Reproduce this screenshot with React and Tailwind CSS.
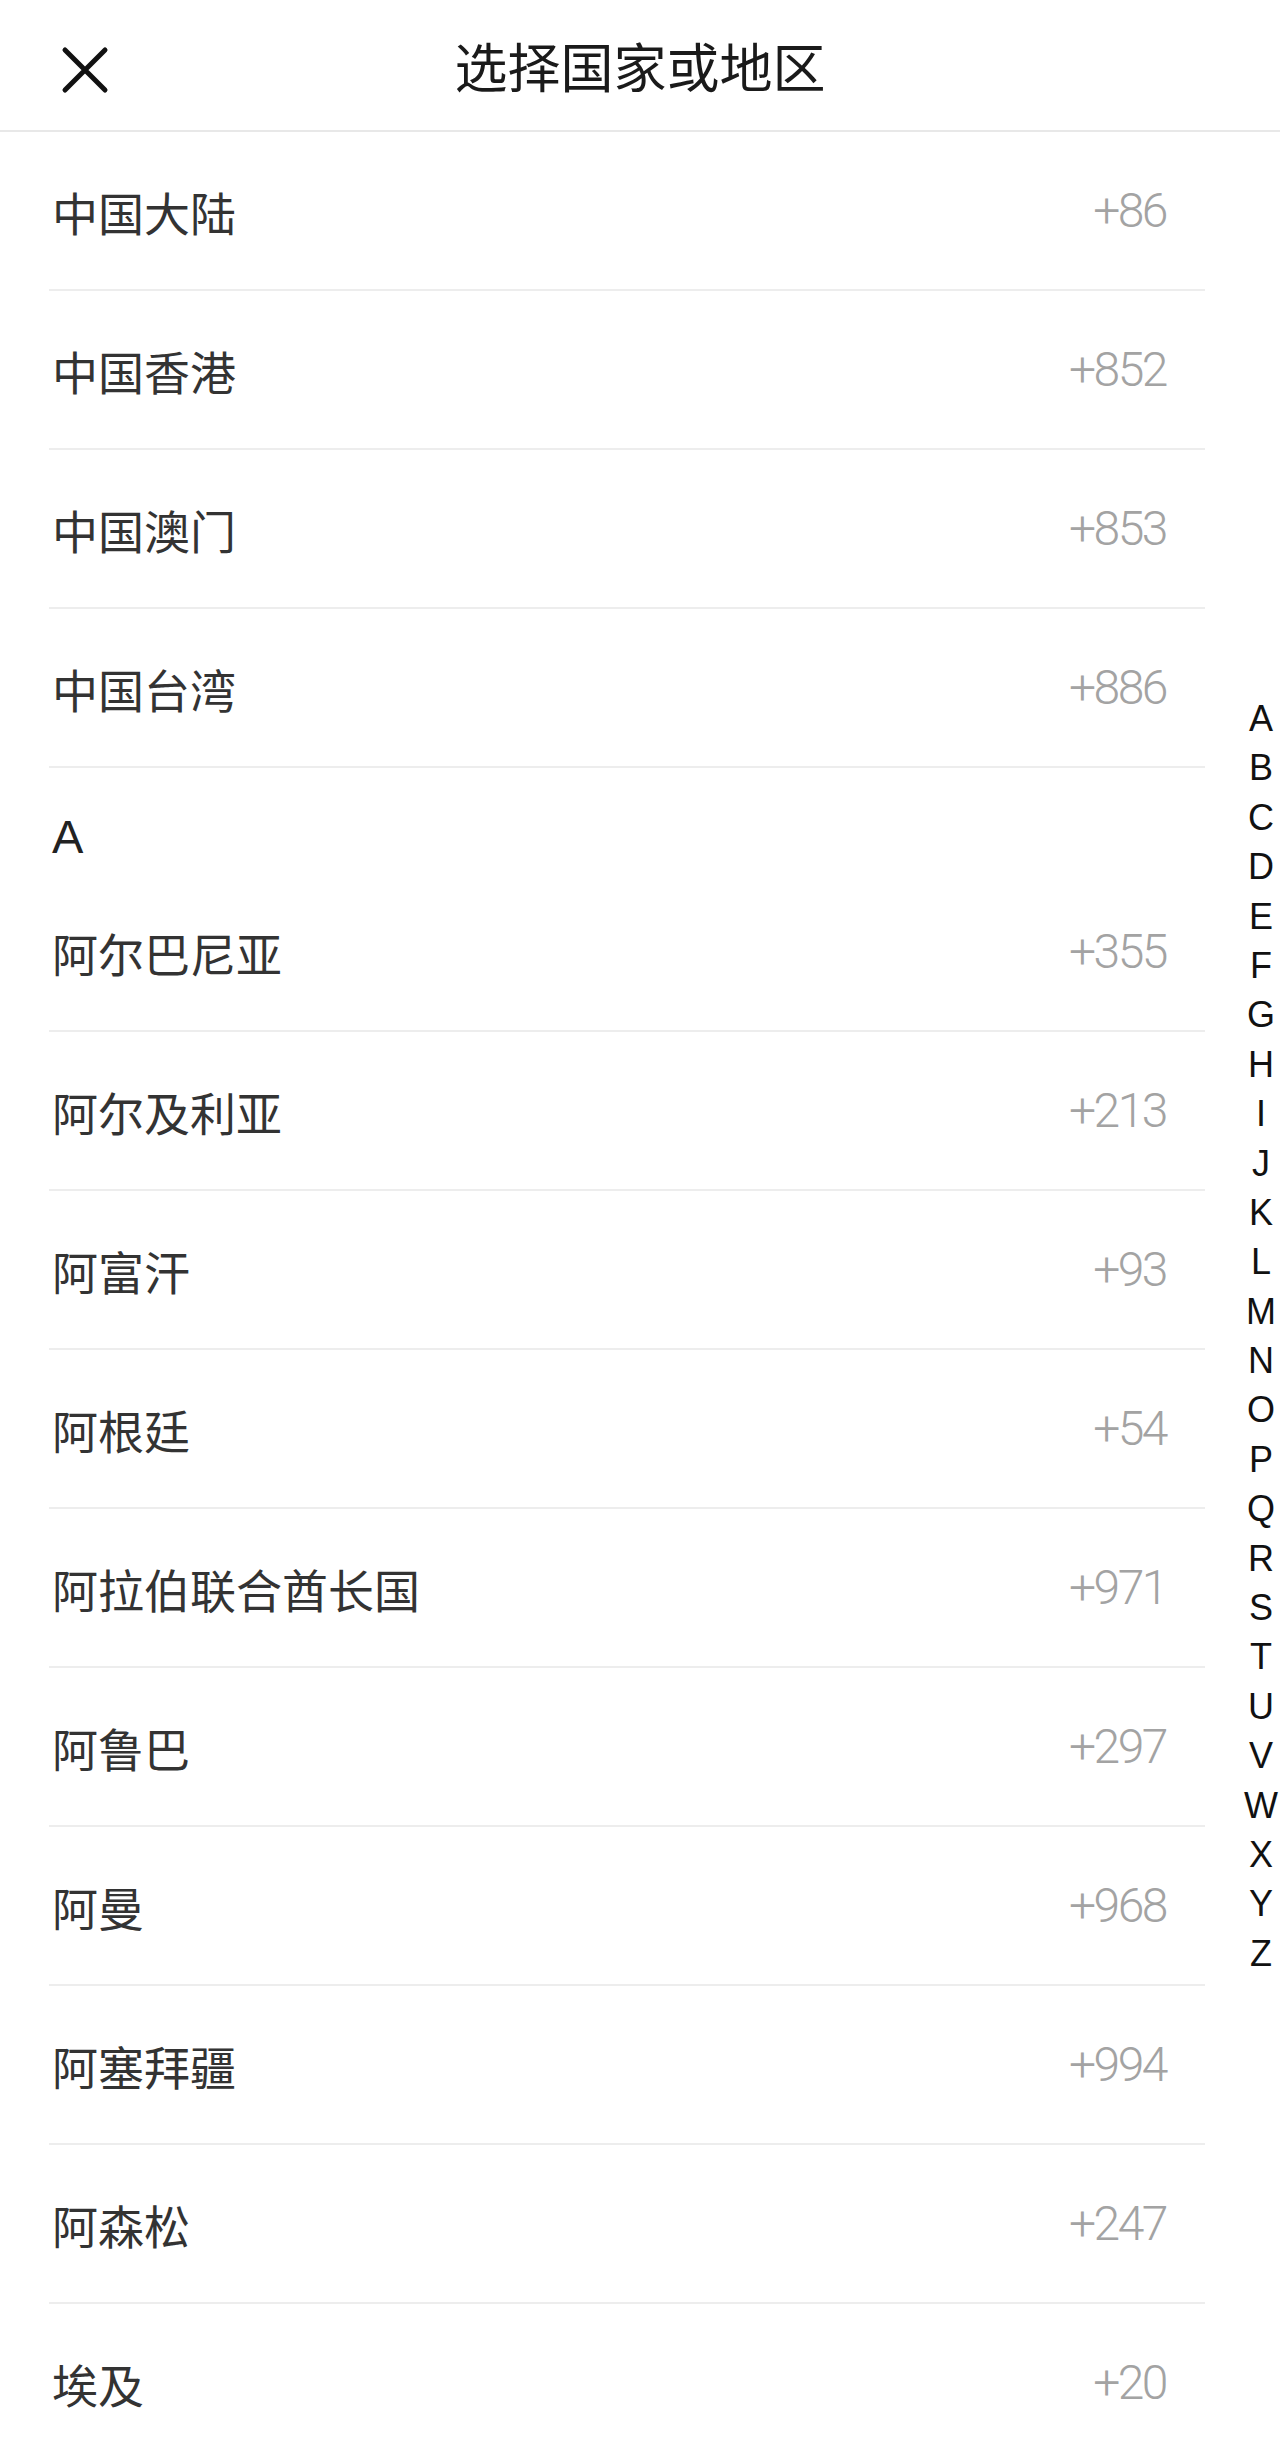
import React from "react";

const pinned = [
  { name: "中国大陆", code: "+86" },
  { name: "中国香港", code: "+852" },
  { name: "中国澳门", code: "+853" },
  { name: "中国台湾", code: "+886" },
];

const sectionA = [
  { name: "阿尔巴尼亚", code: "+355" },
  { name: "阿尔及利亚", code: "+213" },
  { name: "阿富汗", code: "+93" },
  { name: "阿根廷", code: "+54" },
  { name: "阿拉伯联合酋长国", code: "+971" },
  { name: "阿鲁巴", code: "+297" },
  { name: "阿曼", code: "+968" },
  { name: "阿塞拜疆", code: "+994" },
  { name: "阿森松", code: "+247" },
  { name: "埃及", code: "+20" },
];

const letters = "ABCDEFGHIJKLMNOPQRSTUVWXYZ".split("");

const cjk = { fontFamily: '"Noto Sans CJK SC", "Noto Sans", sans-serif' };
const latin = { fontFamily: '"Liberation Sans", Arial, sans-serif' };

const Row = ({ name, code }) => (
  <div className="flex h-[159px] items-center justify-between border-b-2 border-[#ededed] pl-[3px] pr-[39px]">
    <span className="text-[46px] leading-none text-[#333333]" style={cjk}>
      {name}
    </span>
    <span
      className="text-[48px] leading-none tracking-[-2.5px] text-[#a3a3a3]"
      style={{ fontFamily: 'Roboto, "Noto Sans", sans-serif', fontWeight: 300 }}
    >
      {code}
    </span>
  </div>
);

export default function App() {
  return (
    <div className="relative h-[2438px] w-[1280px] overflow-hidden bg-white">
      {/* Header */}
      <div className="relative flex h-[132px] items-center justify-center border-b-2 border-[#e8e8e8]">
        <button className="absolute left-[61px] top-[46px] h-[48px] w-[48px]">
          <svg viewBox="0 0 48 48" className="h-full w-full">
            <path d="M4 4 L44 44 M44 4 L4 44" stroke="#111" strokeWidth="5" strokeLinecap="round" />
          </svg>
        </button>
        <h1 className="text-[53px] leading-none text-[#1a1a1a]" style={cjk}>
          选择国家或地区
        </h1>
      </div>

      {/* List */}
      <div className="ml-[49px] w-[1156px]">
        {pinned.map((c) => (
          <Row key={c.name} {...c} />
        ))}
        <div className="flex h-[105px] items-center pl-[3px] pt-[32px]">
          <span className="text-[47px] leading-none text-[#222222]" style={latin}>
            A
          </span>
        </div>
        {sectionA.map((c) => (
          <Row key={c.name} {...c} />
        ))}
      </div>

      {/* Alphabet index */}
      <div className="absolute right-0 top-[694px] flex w-[38px] flex-col items-center">
        {letters.map((l) => (
          <span key={l} className="h-[49.4px] text-[36px] leading-[49.4px] text-[#111111]" style={latin}>
            {l}
          </span>
        ))}
      </div>
    </div>
  );
}
